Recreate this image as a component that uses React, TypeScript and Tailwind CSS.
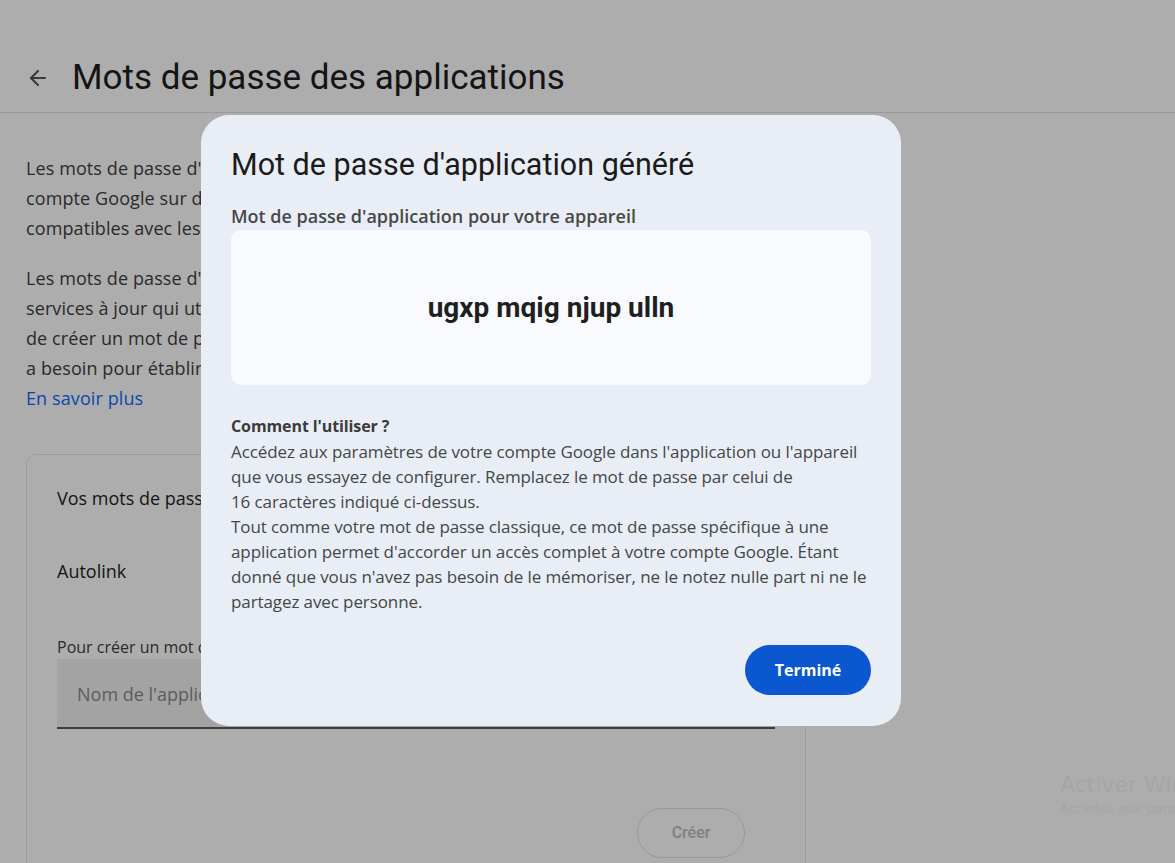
import { ArrowLeft } from 'lucide-react'

const roboto = "font-['Roboto','Liberation_Sans',sans-serif]"
const openSans = "font-['Open_Sans','Liberation_Sans',sans-serif]"

function BackgroundPage() {
  return (
    <div className={`min-h-screen bg-[#adadad] text-[#151515] ${openSans}`}>
      {/* Top bar */}
      <div className="flex h-[113px] items-center border-b border-[#999999] pl-[26px] pt-[43px]">
        <ArrowLeft className="h-[24px] w-[24px] text-[#3a3a3a]" strokeWidth={2.2} />
        <h1 className={`ml-[22px] text-[35px] leading-[44px] text-[#141414] ${roboto}`}>Mots de passe des applications</h1>
      </div>

      <div className="w-[780px] pl-[26px] pt-[40px] text-[18px] leading-[30px] tracking-[0.1px] text-[#2a2a2a]">
        <p className="whitespace-nowrap">
          Les mots de passe d'application vous permettent de vous connecter à votre
          <br />
          compte Google sur des applications et services plus anciens qui ne sont pas
          <br />
          compatibles avec les normes de sécurité modernes.
        </p>
        <p className="mt-[20px] whitespace-nowrap">
          Les mots de passe d'application sont moins sécurisés que l'utilisation
          <br />
          services à jour qui utilisent les normes de sécurité modernes. Avant
          <br />
          de créer un mot de passe d'application, vérifiez si votre application en
          <br />
          a besoin pour établir la connexion.
          <br />
          <a className="text-[#0b47b0]">En savoir plus</a>
        </p>

        {/* Card */}
        <div className="mt-[41px] h-[420px] w-[780px] rounded-t-[10px] border border-[#9c9c9c] px-[30px] pt-[30px] tracking-normal">
          <h2 className="text-[18px] font-medium leading-[26px] text-[#141414]">Vos mots de passe d'application</h2>
          <div className="mt-[47px] text-[18px] leading-[26px] text-[#141414]">Autolink</div>
          <div className="mt-[53px] text-[16px] leading-[20px] text-[#2a2a2a]">
            Pour créer un mot de passe spécifique à une application, saisissez son nom ci-dessous…
          </div>
          <div className="mt-[2px] h-[70px] w-[718px] border-b-2 border-[#3d3d3d] bg-[#a3a3a3] pl-[20px] text-[18px] leading-[70px] text-[#5c5c5c]">
            Nom de l'application
          </div>
          <div className="mt-[79px] flex w-[718px] justify-end pr-[30px]">
            <button className={`h-[50px] w-[108px] rounded-full border border-[#999999] text-[16px] font-medium text-[#808080] ${roboto}`}>
              Créer
            </button>
          </div>
        </div>
      </div>
    </div>
  )
}

function GeneratedDialog() {
  return (
    <div className={`absolute left-[201px] top-[115px] w-[700px] rounded-[28px] bg-[#e9eef6] px-[30px] pb-[31px] pt-[30px] ${openSans}`}>
      <h2 className={`text-[30.5px] leading-[40px] text-[#1b1b1b] ${roboto}`}>Mot de passe d'application généré</h2>
      <div className="mt-[20px] text-[18px] font-semibold leading-[22px] text-[#474747]">
        Mot de passe d'application pour votre appareil
      </div>
      <div className="mt-[3px] flex h-[155px] items-center justify-center rounded-[10px] bg-[#f8fafd]">
        <span className={`text-[28px] font-bold text-[#1f1f1f] ${roboto}`}>ugxp mqig njup ulln</span>
      </div>
      <div className="mt-[29px] whitespace-nowrap text-[17px] leading-[25px] tracking-[-0.1px] text-[#444746]">
        <div className="text-[16px] font-bold text-[#3b3b3b]">Comment l'utiliser ?</div>
        <p>
          Accédez aux paramètres de votre compte Google dans l'application ou l'appareil
          <br />
          que vous essayez de configurer. Remplacez le mot de passe par celui de
          <br />
          16 caractères indiqué ci-dessus.
        </p>
        <p>
          Tout comme votre mot de passe classique, ce mot de passe spécifique à une
          <br />
          application permet d'accorder un accès complet à votre compte Google. Étant
          <br />
          donné que vous n'avez pas besoin de le mémoriser, ne le notez nulle part ni ne le
          <br />
          partagez avec personne.
        </p>
      </div>
      <div className="mt-[31px] flex justify-end">
        <button className="h-[50px] w-[126px] rounded-full bg-[#0b57d0] text-[16px] font-bold text-white">Terminé</button>
      </div>
    </div>
  )
}

export default function App() {
  return (
    <div className="relative h-[863px] w-[1175px] overflow-hidden">
      <BackgroundPage />
      <GeneratedDialog />
      {/* Windows activation watermark */}
      <div className="absolute left-[1060px] top-[770px] whitespace-nowrap font-['DejaVu_Sans',sans-serif] text-[#a5a5a5]">
        <div className="text-[22px] leading-[30px]">Activer Windows</div>
        <div className="text-[13px] leading-[18px]">Accédez aux paramètres pour activer Windows.</div>
      </div>
    </div>
  )
}
